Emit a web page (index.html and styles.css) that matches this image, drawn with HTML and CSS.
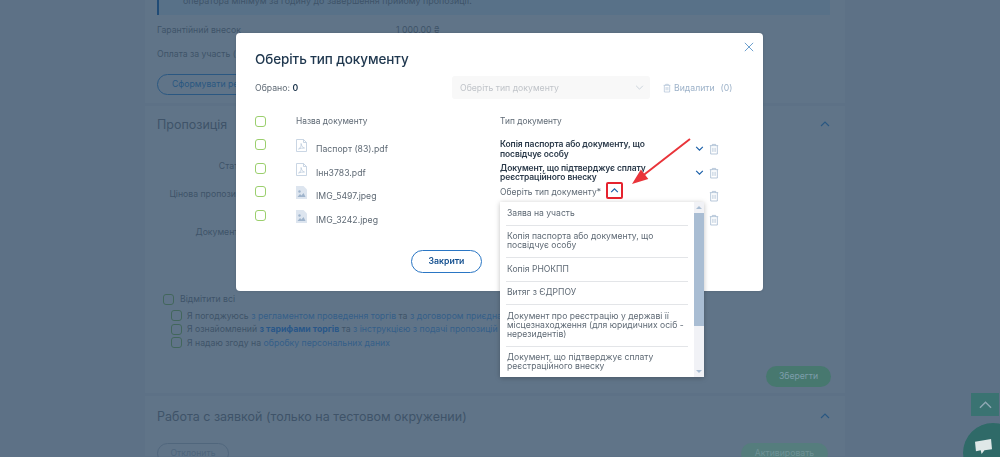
FILE: index.html
```html
<!DOCTYPE html>
<html>
<head>
    <title>Оберіть тип документу</title>
    <link rel="stylesheet" href="styles.css">
</head>
<body>
    <div class="page">
        <section class="card card-top">
            <div class="note">оператора мінімум за годину до завершення прийому пропозиції.</div>
            <div class="info-row info-first"><span class="info-label">Гарантійний внесок</span><span>1 000,00 ₴</span></div>
            <div class="info-row"><span class="info-label">Оплата за участь (</span></div>
            <a class="btn-outline">Сформувати реєстр</a>
        </section>

        <section class="card card-offer">
            <div class="card-head">
                <h2>Пропозиція</h2>
                <svg class="head-chev" viewBox="0 0 10 6"><path d="M1 5l4-4 4 4"/></svg>
            </div>
            <div class="field field-status">Статус</div>
            <div class="field field-price">Цінова пропозиція</div>
            <div class="field field-docs">Документи*</div>
            <label class="check-all"><span class="box"></span><span>Відмітити всі</span></label>
            <ul class="agree">
                <li><span class="box"></span><span>Я погоджуюсь <a>з регламентом проведення торгів</a> та <a>з договором приєднання</a></span></li>
                <li><span class="box"></span><span>Я ознайомлений <a class="strong">з тарифами торгів</a> та <a>з інструкцією з подачі пропозицій</a></span></li>
                <li><span class="box"></span><span>Я надаю згоду на <a>обробку персональних даних</a></span></li>
            </ul>
            <div class="save-row"><a class="btn-green">Зберегти</a></div>
        </section>

        <section class="card card-test">
            <div class="card-head">
                <h2>Работа с заявкой (только на тестовом окружении)</h2>
                <svg class="head-chev" viewBox="0 0 10 6"><path d="M1 5l4-4 4 4"/></svg>
            </div>
            <div class="test-row">
                <a class="btn-outline btn-grey">Отклонить</a>
                <a class="btn-green btn-pale">Активировать</a>
            </div>
        </section>
    </div>

    <a class="to-top"><svg viewBox="0 0 14 8"><path d="M1 7l6-6 6 6"/></svg></a>
    <a class="chat">
        <svg viewBox="0 0 20 18"><path d="M1 4l17-3 1 11-8 1-3 4-1-4-5 1z"/></svg>
    </a>

    <div class="overlay"></div>

    <div class="modal">
        <svg class="close" viewBox="0 0 12 12"><path d="M1 1l10 10M11 1L1 11"/></svg>
        <h1>Оберіть тип документу</h1>

        <div class="toolbar">
            <div class="selected">Обрано: <b>0</b></div>
            <div class="bulk-select">
                <span>Оберіть тип документу</span>
                <svg viewBox="0 0 10 6"><path d="M1 1l4 4 4-4"/></svg>
            </div>
            <a class="bulk-delete">
                <svg class="trash" viewBox="0 0 12 14"><path d="M1 3h10M4 3V1.5h4V3M2 3v10h8V3M4.7 5.5v5M7.3 5.5v5"/></svg>
                <span>Видалити</span> <span class="count">(0)</span>
            </a>
        </div>

        <div class="doc-head">
            <span class="box"></span>
            <span>Назва документу</span>
            <span>Тип документу</span>
        </div>

        <div class="doc-row">
            <span class="box"></span>
            <div class="doc-name">
                <svg class="file" viewBox="0 0 11 13"><path d="M.5.5h7l3 3v9H.5zM7.5.5v3h3"/><path d="M2.5 10c2-1 3-3 2.6-5.500C5.500 7 6.500 8.500 8.500 9c-2 0-4 .2-6 1z"/></svg>
                <span>Паспорт (83).pdf</span>
            </div>
            <div class="doc-type">Копія паспорта або документу, що посвідчує особу</div>
            <svg class="chev" viewBox="0 0 10 6"><path d="M1 1l4 4 4-4"/></svg>
            <svg class="trash" viewBox="0 0 12 14"><path d="M1 3h10M4 3V1.5h4V3M2 3v10h8V3M4.7 5.5v5M7.3 5.5v5"/></svg>
        </div>

        <div class="doc-row">
            <span class="box"></span>
            <div class="doc-name">
                <svg class="file" viewBox="0 0 11 13"><path d="M.5.5h7l3 3v9H.5zM7.5.5v3h3"/><path d="M2.5 10c2-1 3-3 2.6-5.500C5.500 7 6.500 8.500 8.500 9c-2 0-4 .2-6 1z"/></svg>
                <span>Інн3783.pdf</span>
            </div>
            <div class="doc-type">Документ, що підтверджує сплату реєстраційного внеску</div>
            <svg class="chev" viewBox="0 0 10 6"><path d="M1 1l4 4 4-4"/></svg>
            <svg class="trash" viewBox="0 0 12 14"><path d="M1 3h10M4 3V1.5h4V3M2 3v10h8V3M4.7 5.5v5M7.3 5.5v5"/></svg>
        </div>

        <div class="doc-row">
            <span class="box"></span>
            <div class="doc-name">
                <svg class="file file-img" viewBox="0 0 11 13"><path class="sheet" d="M0 0h7.500L11 3.500V13H0z"/><circle cx="3.500" cy="5.500" r="1.200"/><path d="M1.500 11l2.500-3 1.500 1.500L7.500 7l2 4z"/></svg>
                <span>IMG_5497.jpeg</span>
            </div>
            <div class="doc-type doc-open">
                <span>Оберіть тип документу*</span>
                <a class="chev-box"><svg class="chev" viewBox="0 0 10 6"><path d="M1 5l4-4 4 4"/></svg></a>
                <div class="dropdown">
                    <div class="options">
                        <div class="option">Заява на участь</div>
                        <div class="option">Копія паспорта або документу, що посвідчує особу</div>
                        <div class="option">Копія РНОКПП</div>
                        <div class="option">Витяг з ЄДРПОУ</div>
                        <div class="option">Документ про реєстрацію у державі її місцезнаходження (для юридичних осіб - нерезидентів)</div>
                        <div class="option">Документ, що підтверджує сплату реєстраційного внеску</div>
                    </div>
                    <div class="scrollbar">
                        <i class="arrow-up"></i>
                        <div class="thumb"></div>
                        <i class="arrow-down"></i>
                    </div>
                </div>
            </div>
            <span></span>
            <svg class="trash" viewBox="0 0 12 14"><path d="M1 3h10M4 3V1.5h4V3M2 3v10h8V3M4.7 5.5v5M7.3 5.5v5"/></svg>
        </div>

        <div class="doc-row">
            <span class="box"></span>
            <div class="doc-name">
                <svg class="file file-img" viewBox="0 0 11 13"><path class="sheet" d="M0 0h7.500L11 3.500V13H0z"/><circle cx="3.500" cy="5.500" r="1.200"/><path d="M1.500 11l2.500-3 1.500 1.500L7.500 7l2 4z"/></svg>
                <span>IMG_3242.jpeg</span>
            </div>
            <div class="doc-type"></div>
            <span></span>
            <svg class="trash" viewBox="0 0 12 14"><path d="M1 3h10M4 3V1.5h4V3M2 3v10h8V3M4.7 5.5v5M7.3 5.5v5"/></svg>
        </div>

        <a class="btn-close">Закрити</a>
    </div>

    <svg class="pointer" viewBox="0 0 70 55"><path d="M61.4.2L16 35.4l-3.100-3.900L4 46l16.300-5.100L17.200 37 62.600 1.800z"/></svg>
</body>
</html>
```

FILE: styles.css
```css
* {
    box-sizing: border-box;
}
body {
    margin: 0;
    height: 457px;
    overflow: hidden;
    background: #f4f6f9;
    font-family: Inter, "Noto Sans", sans-serif;
    font-size: 8.7px;
    color: #5f6a75;
}

/* page behind the modal */
.page {
    width: 700px;
    margin-left: 145px;
    color: #8f9296;
}
.page a {
    color: #70b8ff;
}
.card {
    background: #fff;
    padding: 0 15px 0 12px;
}
.card-top {
    height: 103px;
}
.note {
    height: 15px;
    padding-left: 24px;
    line-height: 2px;
    background: #e3f4ff;
    border-left: 2px solid #2a76c4;
    font-size: 8.9px;
    overflow: hidden;
}
.info-row {
    display: flex;
    height: 24px;
    line-height: 16px;
}
.info-first {
    margin-top: 7px;
}
.info-label {
    width: 239px;
}
.page .btn-outline {
    display: inline-block;
    width: 120px;
    height: 21px;
    margin-top: 4px;
    padding-left: 14px;
    line-height: 19px;
    border: 1px solid #4a9fe8;
    border-radius: 11px;
    color: #4a9fe8;
    white-space: nowrap;
}
.card-offer {
    height: 287px;
    margin-top: 3px;
    padding-top: 7px;
}
.card-head {
    display: flex;
    justify-content: space-between;
    align-items: center;
    height: 22px;
}
.card-head h2 {
    margin: 0;
    font-size: 12.5px;
    font-weight: 400;
}
.head-chev {
    width: 10px;
    height: 6px;
    fill: none;
    stroke: #4a9fe8;
    stroke-width: 1.2;
}
.field {
    width: 91px;
    text-align: right;
    white-space: nowrap;
    line-height: 12px;
}
.field-status {
    margin-top: 25px;
}
.field-price {
    margin-top: 16px;
}
.field-docs {
    margin-top: 26px;
}
.box {
    display: block;
    flex: none;
    width: 11px;
    height: 11px;
    border: 1px solid #9bcf6d;
    border-radius: 3px;
}
.check-all {
    display: flex;
    align-items: center;
    gap: 6px;
    margin: 55px 0 0 6px;
    height: 12px;
}
.agree {
    margin: 4px 0 0 14px;
    padding: 0;
    list-style: none;
}
.agree li {
    display: flex;
    gap: 5px;
    align-items: center;
    height: 13.5px;
    white-space: nowrap;
}
.page .strong {
    color: #4a9fff;
    font-weight: 700;
}
.save-row {
    display: flex;
    justify-content: flex-end;
    margin: 16px -1px 0 0;
}
/* these stay muted but are lighter than the overlay allows, so they sit above it */
.page .btn-green {
    position: relative;
    z-index: 1;
    display: block;
    width: 65px;
    height: 21px;
    line-height: 21px;
    text-align: center;
    background: #47786f;
    border-radius: 11px;
    color: #7d9dab;
}
.card-test {
    height: 60px;
    margin-top: 3px;
    padding-top: 9px;
}
.test-row {
    display: flex;
    justify-content: space-between;
    margin-top: 16px;
    padding-right: 2px;
}
.page .btn-grey {
    width: 72px;
    margin-top: 0;
    padding: 0;
    text-align: center;
    color: #c5ccd4;
    border-color: #c9d0d8;
}
.page .btn-pale {
    width: 87px;
    background: #557d7d;
    color: #6f9296;
}
.to-top {
    position: fixed;
    z-index: 1;
    left: 971px;
    top: 393px;
    width: 28px;
    height: 23px;
    background: #3a7372;
    display: flex;
    align-items: center;
    justify-content: center;
}
.to-top svg {
    width: 13px;
    height: 8px;
    fill: none;
    stroke: #8fa8b4;
    stroke-width: 1.5;
}
.chat {
    position: fixed;
    z-index: 1;
    left: 963px;
    top: 423px;
    width: 60px;
    height: 60px;
    border-radius: 50%;
    background: #2f6a68;
}
.chat svg {
    position: absolute;
    left: 11px;
    top: 15px;
    width: 19px;
    height: 17px;
    fill: #dfe8e8;
}

.overlay {
    position: fixed;
    left: 0;
    top: 0;
    right: 0;
    bottom: 0;
    background: rgba(28, 57, 85, .7);
}

/* modal */
.modal {
    position: fixed;
    z-index: 2;
    left: 236px;
    top: 33px;
    width: 527px;
    height: 258px;
    padding: 19px;
    background: #fff;
    border-radius: 4px;
    box-shadow: 0 0 3px rgba(0, 0, 0, .15);
}
.close {
    position: absolute;
    right: 9px;
    top: 9px;
    width: 10px;
    height: 10px;
    fill: none;
    stroke: #4f8dc4;
    stroke-width: 1;
}
.modal h1 {
    margin: 0;
    font-size: 13.5px;
    letter-spacing: -.1px;
    line-height: 15px;
    font-weight: 500;
    color: #20384f;
}
.toolbar {
    display: flex;
    align-items: center;
    margin-top: 9px;
    height: 23px;
}
.selected {
    width: 197px;
}
.selected b {
    color: #20384f;
    font-weight: 600;
}
.bulk-select {
    display: flex;
    justify-content: space-between;
    align-items: center;
    width: 198px;
    height: 23px;
    padding: 0 6px 0 8px;
    background: #f8f8f8;
    border-radius: 3px;
    color: #c0c4c9;
}
.bulk-select svg {
    width: 9px;
    height: 5px;
    fill: none;
    stroke: #c3ccd6;
}
.bulk-delete {
    display: flex;
    align-items: center;
    gap: 3px;
    margin-left: 13px;
    color: #9db2c9;
}
.count {
    margin-left: 3px;
}
.doc-head {
    display: grid;
    grid-template-columns: 41px 204px 1fr;
    align-items: center;
    height: 12px;
    margin: 16px 0 12px;
    font-size: 8.4px;
}
.doc-row {
    display: grid;
    grid-template-columns: 41px 204px 195px 14px 12px;
    height: 23.5px;
}
.doc-name {
    display: flex;
    gap: 9px;
}
.doc-name span {
    padding-top: 4px;
    line-height: 12px;
}
.file {
    flex: none;
    width: 11px;
    height: 13px;
    fill: none;
    stroke: #bccbdd;
    stroke-width: .8;
}
.file-img {
    fill: #9fb4cc;
    stroke: none;
}
.file-img .sheet {
    fill: #dde5ef;
}
.doc-type {
    padding-top: 1px;
    font-size: 8.5px;
    letter-spacing: -.1px;
    line-height: 9.5px;
    font-weight: 600;
    color: #2b3a4a;
    padding-right: 30px;
}
.doc-open {
    position: relative;
    display: flex;
    align-items: flex-start;
    padding: 0;
    letter-spacing: 0;
    font-weight: 400;
    color: #5f6a75;
    line-height: 12px;
}
.chev {
    width: 9px;
    height: 5px;
    margin-top: 7px;
    fill: none;
    stroke: #1a5fa8;
    stroke-width: 1.4;
}
.chev-box {
    display: flex;
    justify-content: center;
    align-items: center;
    width: 17px;
    height: 17px;
    margin: -4px 0 0 5px;
    border: 2px solid #e5232f;
    border-radius: 2px;
}
.chev-box .chev {
    margin: 0;
}
.trash {
    flex: none;
    width: 10px;
    height: 12px;
    margin-top: 4px;
    fill: none;
    stroke: #a9bdd3;
    stroke-width: 1;
}
.bulk-delete .trash {
    margin-top: 0;
    width: 8px;
    height: 10px;
}

/* open dropdown */
.dropdown {
    position: absolute;
    left: 0;
    top: 16px;
    z-index: 2;
    display: flex;
    width: 204px;
    height: 175px;
    background: #fff;
    box-shadow: 0 1px 5px rgba(0, 0, 0, .25);
    overflow: hidden;
}
.options {
    flex: 1;
    padding: 0 6px;
}
.option {
    padding: 6.5px 1px 7px;
    font-size: 8.6px;
    line-height: 9px;
    color: #5f6a75;
    border-bottom: 1px solid #e3e5e8;
}
.option:last-child {
    border-bottom: 0;
}
.scrollbar {
    position: relative;
    flex: none;
    width: 10px;
    background: #f1f2f6;
}
.thumb {
    position: absolute;
    left: 0;
    top: 11px;
    width: 10px;
    height: 113px;
    background: #a9bdd3;
}
.arrow-up, .arrow-down {
    position: absolute;
    left: 2px;
    width: 0;
    height: 0;
    border-left: 3px solid transparent;
    border-right: 3px solid transparent;
}
.arrow-up {
    top: 4px;
    border-bottom: 3px solid #a9bdd3;
}
.arrow-down {
    bottom: 4px;
    border-top: 3px solid #a9bdd3;
}
.btn-close {
    display: block;
    width: 71px;
    height: 23px;
    margin: 17px 0 0 156px;
    line-height: 21px;
    text-align: center;
    border: 1px solid #2a76c4;
    border-radius: 12px;
    color: #134f8f;
    font-size: 8.7px;
    font-weight: 600;
}

/* red annotation arrow */
.pointer {
    position: fixed;
    z-index: 3;
    left: 628px;
    top: 138px;
    width: 70px;
    height: 55px;
    fill: #e9343a;
}
```
